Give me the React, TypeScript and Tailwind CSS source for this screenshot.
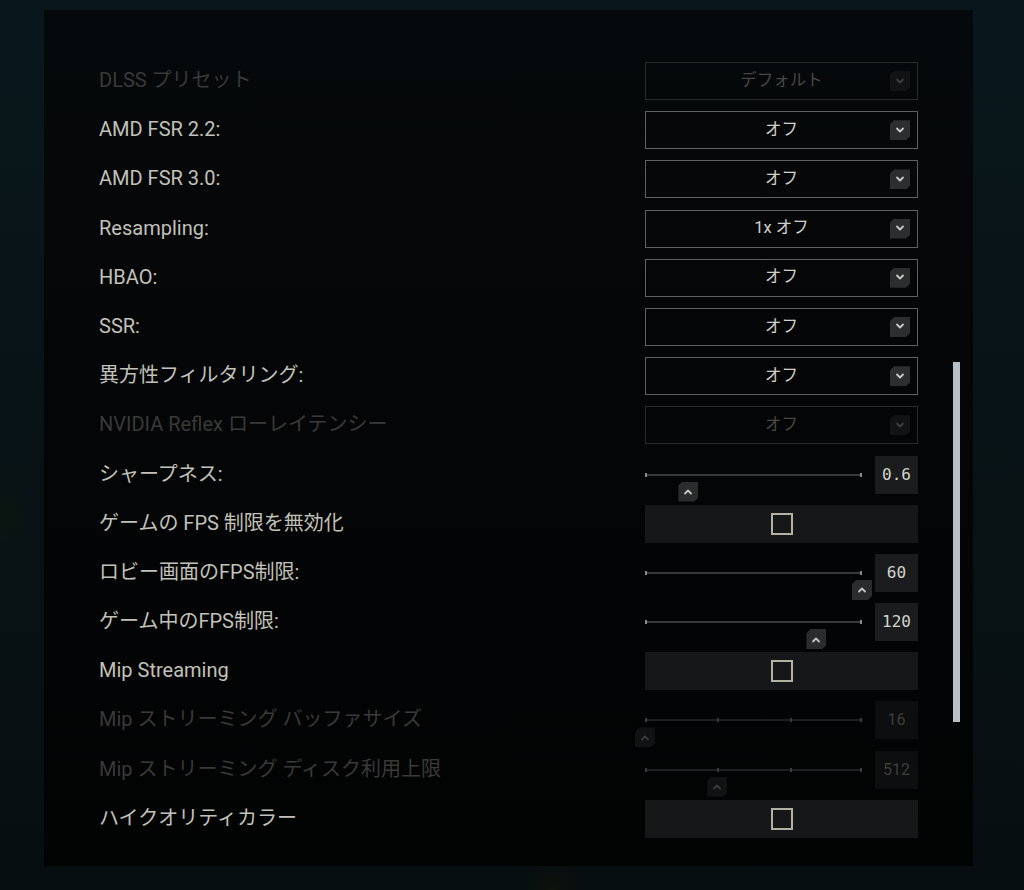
import React from "react";

type Row =
  | { kind: "select"; label: string; value: string; disabled?: boolean }
  | { kind: "slider"; label: string; value: string; pos: number; disabled?: boolean; ticks?: boolean }
  | { kind: "check"; label: string };

const rows: Row[] = [
  { kind: "select", label: "DLSS プリセット", value: "デフォルト", disabled: true },
  { kind: "select", label: "AMD FSR 2.2:", value: "オフ" },
  { kind: "select", label: "AMD FSR 3.0:", value: "オフ" },
  { kind: "select", label: "Resampling:", value: "1x オフ" },
  { kind: "select", label: "HBAO:", value: "オフ" },
  { kind: "select", label: "SSR:", value: "オフ" },
  { kind: "select", label: "異方性フィルタリング:", value: "オフ" },
  { kind: "select", label: "NVIDIA Reflex ローレイテンシー", value: "オフ", disabled: true },
  { kind: "slider", label: "シャープネス:", value: "0.6", pos: 0.2 },
  { kind: "check", label: "ゲームの FPS 制限を無効化" },
  { kind: "slider", label: "ロビー画面のFPS制限:", value: "60", pos: 1 },
  { kind: "slider", label: "ゲーム中のFPS制限:", value: "120", pos: 0.79 },
  { kind: "check", label: "Mip Streaming" },
  { kind: "slider", label: "Mip ストリーミング バッファサイズ", value: "16", pos: 0, disabled: true, ticks: true },
  { kind: "slider", label: "Mip ストリーミング ディスク利用上限", value: "512", pos: 0.333, disabled: true, ticks: true },
  { kind: "check", label: "ハイクオリティカラー" },
];

const FONT = "font-['Roboto','Noto_Sans_CJK_JP',sans-serif]";

function Chevron({ up, color }: { up?: boolean; color: string }) {
  return (
    <svg width="10" height="7" viewBox="0 0 10 7" fill="none">
      <path
        d={up ? "M2 5.5 L5 2.5 L8 5.5" : "M2 1.5 L5 4.5 L8 1.5"}
        stroke={color}
        strokeWidth="1.8"
        strokeLinecap="round"
        strokeLinejoin="round"
      />
    </svg>
  );
}

function Select({ value, disabled }: { value: string; disabled?: boolean }) {
  return (
    <div
      className={`relative flex h-[38px] w-[273px] items-center justify-center border ${
        disabled ? "border-[#2a2b2b]" : "border-[#5f6060]"
      }`}
    >
      <span className={`${FONT} text-[16.5px] ${disabled ? "text-[#474846]" : "text-[#d2d1c9]"}`}>{value}</span>
      <div
        className={`absolute right-[7px] top-[8px] flex h-[20px] w-[20px] items-center justify-center [clip-path:polygon(4px_0,100%_0,100%_calc(100%-4px),calc(100%-4px)_100%,0_100%,0_4px)] ${
          disabled ? "bg-[#121314]" : "bg-[#2c2e2f]"
        }`}
      >
        <Chevron color={disabled ? "#3c3d3d" : "#c9c9c4"} />
      </div>
    </div>
  );
}

function Slider({ value, pos, disabled, ticks }: { value: string; pos: number; disabled?: boolean; ticks?: boolean }) {
  const endTick = disabled ? "bg-[#3a3b3b]" : "bg-[#8a8b8a]";
  return (
    <div className="flex h-[38px] w-[273px] items-center gap-[13px]">
      <div className="relative h-[38px] flex-1">
        <div className={`absolute left-0 right-0 top-[18px] h-[2px] ${disabled ? "bg-[#1e1f20]" : "bg-[#38393a]"}`} />
        <div className={`absolute left-0 top-[17px] h-[4px] w-[2px] ${endTick}`} />
        <div className={`absolute right-0 top-[17px] h-[4px] w-[2px] ${endTick}`} />
        {ticks && (
          <>
            <div className={`absolute left-[33.3%] top-[17px] h-[4px] w-[2px] ${endTick}`} />
            <div className={`absolute left-[66.6%] top-[17px] h-[4px] w-[2px] ${endTick}`} />
          </>
        )}
        <div
          className={`absolute top-[26px] flex h-[20px] w-[20px] -translate-x-1/2 items-center justify-center [clip-path:polygon(4px_0,100%_0,100%_calc(100%-4px),calc(100%-4px)_100%,0_100%,0_4px)] ${
            disabled ? "bg-[#111213]" : "bg-[#2a2c2d]"
          }`}
          style={{ left: `${pos * 100}%` }}
        >
          <Chevron up color={disabled ? "#3a3b3b" : "#c4c4c0"} />
        </div>
      </div>
      <div
        className={`flex h-[38px] w-[43px] items-center justify-center ${
          disabled
            ? `bg-[#0d0e0f] text-[#3d3e3d] ${FONT} text-[16px]`
            : "bg-[#1b1c1d] text-[#d4d3cb] font-['DejaVu_Sans_Mono',monospace] text-[16px]"
        }`}
      >
        {value}
      </div>
    </div>
  );
}

function Check() {
  return (
    <div className="flex h-[38px] w-[273px] items-center justify-center bg-[#161718]">
      <div className="h-[22px] w-[22px] border-2 border-[#b3b1a2]" />
    </div>
  );
}

export default function App() {
  return (
    <div className="h-[890px] w-[1024px] overflow-hidden bg-[radial-gradient(circle_at_0%_58%,#0b150f_0,transparent_40px),radial-gradient(circle_at_54%_100%,#0e120c_0,transparent_30px),linear-gradient(#09171c,#070e10)] px-[44px] pb-[24px] pt-[10px]">
      <div className="relative h-[856px] w-[929px] bg-[linear-gradient(180deg,#06090b_0%,#040506_50%,#020303_100%)] px-[55px] pt-[52px]">
        <div className="flex flex-col gap-[11.2px]">
          {rows.map((r, i) => {
            const disabled = "disabled" in r && r.disabled;
            return (
              <div key={i} className="flex h-[38px] items-center justify-between">
                <span
                  className={`${FONT} -mt-[2px] text-[20px] leading-none ${disabled ? "text-[#393a39]" : "text-[#c2c1b9]"}`}
                >
                  {r.label}
                </span>
                {r.kind === "select" && <Select value={r.value} disabled={r.disabled} />}
                {r.kind === "slider" && (
                  <Slider value={r.value} pos={r.pos} disabled={r.disabled} ticks={r.ticks} />
                )}
                {r.kind === "check" && <Check />}
              </div>
            );
          })}
        </div>
        <div className="absolute left-[909px] top-[352px] h-[360px] w-[7px] bg-[#b6bec6]" />
      </div>
    </div>
  );
}
